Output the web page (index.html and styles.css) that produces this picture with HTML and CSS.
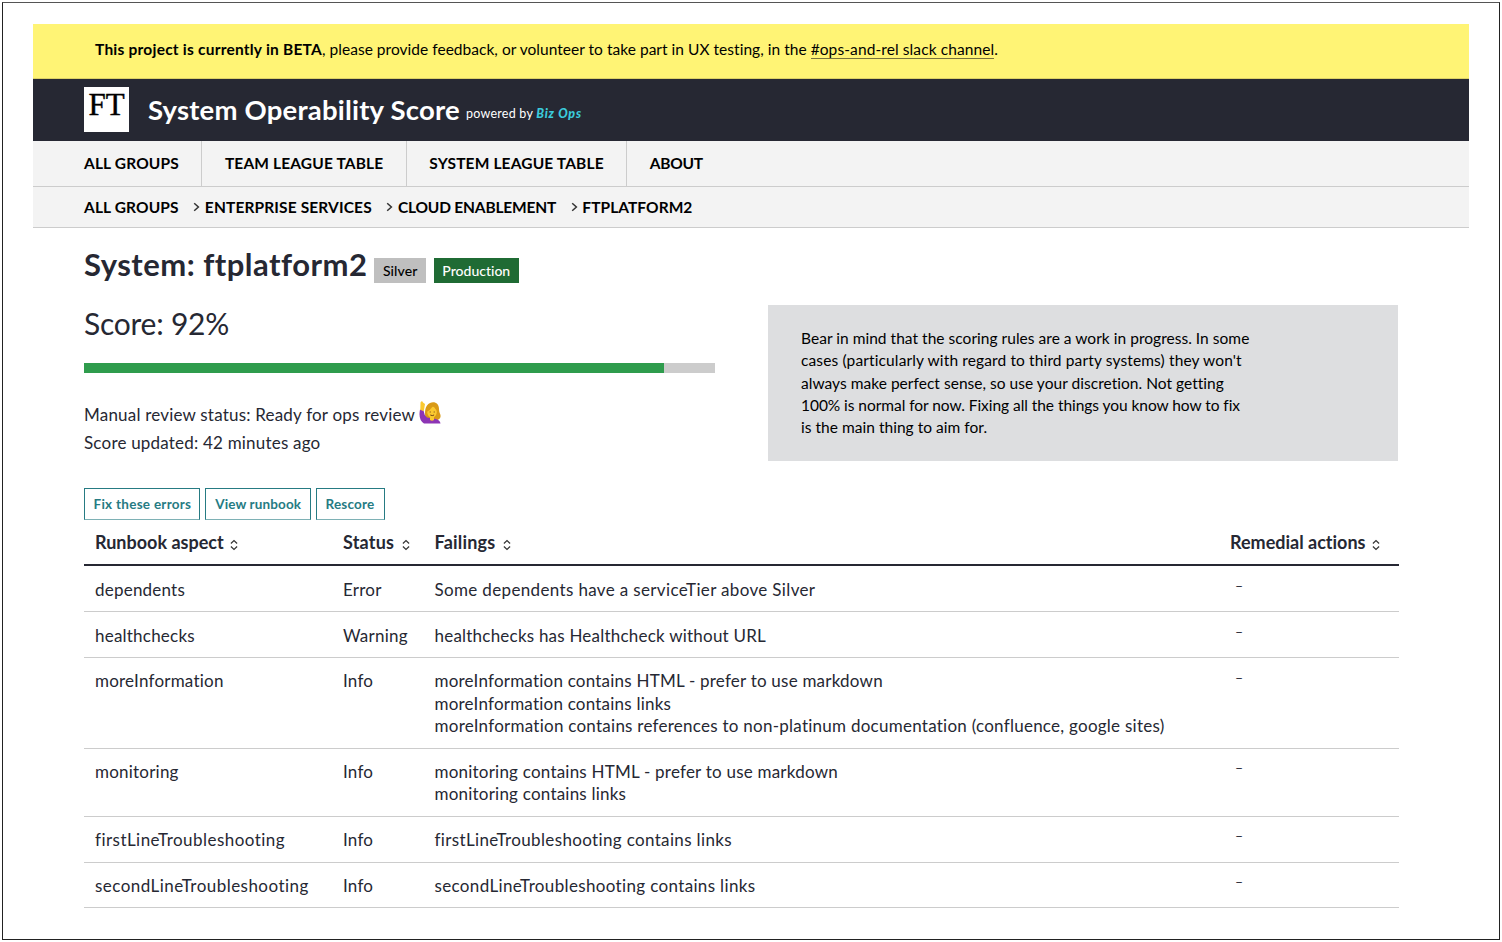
FILE: index.html
```html
<!DOCTYPE html>
<html lang="en">
<head>
<meta charset="utf-8">
<title>System Operability Score</title>
<link rel="stylesheet" href="styles.css">
</head>
<body>
<svg class="defs" aria-hidden="true">
  <symbol id="sort" viewBox="0 0 8 12"><path d="M.9 4.5 4 1.5 7.1 4.5M.9 7.5 4 10.5 7.1 7.5"/></symbol>
  <symbol id="chevron" viewBox="0 0 7 10"><path d="M1.2 1.2 5.4 5 1.2 8.8"/></symbol>
</svg>
<div class="page">
  <div class="banner"><p><strong>This project is currently in BETA</strong>, please provide feedback, or volunteer to take part in UX testing, in the <a>#ops-and-rel slack channel</a>.</p></div>
  <header class="header">
    <div class="logo">FT</div>
    <div class="title">System Operability Score</div>
    <div class="powered">powered by <a>Biz Ops</a></div>
  </header>
  <nav class="nav">
    <a>ALL GROUPS</a><a>TEAM LEAGUE TABLE</a><a>SYSTEM LEAGUE TABLE</a><a class="about">ABOUT</a>
  </nav>
  <nav class="crumbs">
    <a>ALL GROUPS</a><svg class="chevron"><use href="#chevron"/></svg><a>ENTERPRISE SERVICES</a><svg class="chevron"><use href="#chevron"/></svg><a class="tight">CLOUD ENABLEMENT</a><svg class="chevron"><use href="#chevron"/></svg><a class="current">FTPLATFORM2</a>
  </nav>
  <main class="main">
    <div class="heading"><h1>System: ftplatform2</h1><span class="badge silver">Silver</span><span class="badge production">Production</span></div>
    <div class="overview">
      <section class="summary">
        <h2>Score: 92%</h2>
        <div class="progress"><div class="bar" style="width:91.9%"></div></div>
        <p class="meta">Manual review status: Ready for ops review
          <svg class="emoji" viewBox="0 0 22 24">
            <path class="hair" d="M7 20C5 12 6 5 11 3c5-2 9 1 9 6 0 3 1 4 1.500 6 .5 3-1 4-3 5Z"/>
            <path class="purple" d="M1 9.500 4.500 10.500Q5 15 8 17.500L17 19Q21 20 21.500 23.500H5Q-1 20 1 9.500Z"/>
            <path class="skin" d="M1.300 10 1.500 2.500Q3 0 4 2.500L6 4 4.800 11Z"/>
            <path class="skin" d="M11 17h4v3q-2 1.500-4 0Z"/>
            <ellipse class="skin" cx="13" cy="12" rx="4.800" ry="5.500"/>
            <path class="hair" d="M7.500 12Q11 10.500 14.500 5.500q1.500 4 4.500 6Q18.500 4 13 4 8 4 7.500 12Z"/>
            <path class="features" d="M11.200 11.500v1M15.200 11.500v1M11.300 15q2 1.200 3.800 0"/>
          </svg></p>
        <p class="meta">Score updated: 42 minutes ago</p>
      </section>
      <aside class="note">
        Bear in mind that the scoring rules are a work in progress. In some<br>
        <span class="wide">cases (particularly with regard to third party systems) they won't</span><br>
        always make perfect sense, so use your discretion. Not getting<br>
        <span class="tight">100% is normal for now. Fixing all the things you know how to fix</span><br>
        is the main thing to aim for.
      </aside>
    </div>
    <div class="actions"><a class="fix">Fix these errors</a><a class="view">View runbook</a><a class="rescore">Rescore</a></div>
    <table>
      <colgroup><col class="c1"><col class="c2"><col class="c3"><col class="c4"></colgroup>
      <thead><tr>
        <th>Runbook aspect<svg class="sort"><use href="#sort"/></svg></th>
        <th class="wide">Status<svg class="sort"><use href="#sort"/></svg></th>
        <th class="wide">Failings<svg class="sort"><use href="#sort"/></svg></th>
        <th>Remedial actions<svg class="sort"><use href="#sort"/></svg></th>
      </tr></thead>
      <tbody>
        <tr><td>dependents</td><td>Error</td><td class="wide">Some dependents have a serviceTier above Silver</td><td class="dash">–</td></tr>
        <tr><td>healthchecks</td><td>Warning</td><td>healthchecks has Healthcheck without URL</td><td class="dash">–</td></tr>
        <tr><td>moreInformation</td><td>Info</td><td>moreInformation contains HTML - prefer to use markdown<br>moreInformation contains links<br><span class="reference">moreInformation contains references to non-platinum documentation (confluence, google sites)</span></td><td class="dash">–</td></tr>
        <tr><td>monitoring</td><td>Info</td><td>monitoring contains HTML - prefer to use markdown<br>monitoring contains links</td><td class="dash">–</td></tr>
        <tr><td class="wider">firstLineTroubleshooting</td><td>Info</td><td class="wide">firstLineTroubleshooting contains links</td><td class="dash">–</td></tr>
        <tr><td class="wider">secondLineTroubleshooting</td><td>Info</td><td class="wide">secondLineTroubleshooting contains links</td><td class="dash">–</td></tr>
      </tbody>
    </table>
  </main>
</div>
</body>
</html>
```
FILE: styles.css
```css
* { box-sizing: border-box; }
body { margin: 0; background: #fff; color: #262833; font-family: Lato, "Open Sans", sans-serif; font-size: 17px; font-variant-ligatures: none; }
p, h1, h2 { margin: 0; }
svg { fill: none; stroke: #333; }
.defs { display: none; }
.page { width: 1498px; height: 938px; margin: 2px 0 0 2px; padding: 21px 30px 0; border: 1px solid #222; border-top-color: #555; }

.banner { height: 55px; padding-left: 62px; background: #fff475; border-bottom: 1px solid #ddd166; color: #000; font-size: 15.5px; line-height: 51px; letter-spacing: .03px; white-space: pre; }
.banner strong { letter-spacing: .224px; }
.banner a { letter-spacing: .1px; border-bottom: 1px solid #77723d; }

.header { display: flex; height: 62px; padding: 8px 0 0 51px; background: #262833; color: #fff; }
.logo { width: 45px; height: 45px; background: #fff; color: #000; font: 31px/35px "Liberation Serif", serif; text-align: center; -webkit-text-stroke: .4px #000; }
.title { margin-left: 19px; font-size: 27.5px; font-weight: 700; line-height: 45px; letter-spacing: .2px; }
.powered { margin: 4px 0 0 6px; font-size: 12.5px; line-height: 45px; letter-spacing: .259px; }
.powered a { color: #3bcbdc; font-weight: 900; font-style: italic; letter-spacing: .75px; }

.nav { display: flex; height: 46px; padding-left: 28.5px; background: #f3f3f3; border-bottom: 1px solid #ccc; color: #000; font-size: 15.5px; font-weight: 700; line-height: 45px; letter-spacing: .15px; }
.nav a { padding: 0 22.5px; border-right: 1px solid #ccc; }
.nav a:last-child { border: 0; }
.nav .about { letter-spacing: -.26px; }

.crumbs { display: flex; align-items: center; height: 41px; padding: 0 0 1px 51px; background: #f3f3f3; border-bottom: 1px solid #ccc; color: #000; font-size: 15.5px; font-weight: 700; letter-spacing: .13px; }
.crumbs .tight { letter-spacing: -.18px; }
.crumbs .current { letter-spacing: .05px; }
.chevron { width: 7px; height: 10px; margin: 0 4.5px 0 14.7px; stroke-width: 1.5; }

.main { padding: 0 71px 0 51px; }
.heading { display: flex; height: 77px; padding-top: 15px; }
h1 { margin-right: 7px; font-size: 31px; line-height: 42px; letter-spacing: .48px; }
.badge { height: 25px; margin: 15px 8px 0 0; padding: 0 8.5px; font-size: 14px; font-weight: 500; line-height: 26px; }
.silver { background: #bfbfbf; color: #000; letter-spacing: .08px; }
.production { background: #1f6b34; color: #fff; }

.overview { display: flex; justify-content: space-between; height: 156px; }
.summary { width: 631px; }
h2 { height: 58px; font-size: 30px; font-weight: 400; line-height: 37px; letter-spacing: -.242px; }
.progress { height: 10px; margin-bottom: 27px; background: #ccc; }
.bar { height: 10px; background: #2f9c4d; }
.meta { height: 28px; line-height: 28px; letter-spacing: .2px; }
.meta + .meta { padding-top: 1px; }
.emoji { width: 22px; height: 24px; vertical-align: -3px; stroke: none; }
.purple { fill: #8c35b4; }
.hair { fill: #d99a16; }
.skin { fill: #fbc92f; }
.emoji .features { stroke: #704317; stroke-width: 1; }

.note { width: 630px; padding: 22px 33px; background: #dddee0; color: #000; font-size: 15.5px; line-height: 22.25px; letter-spacing: .03px; }
.note .wide { letter-spacing: .129px; }
.note .tight { letter-spacing: -.05px; }

.actions { display: flex; height: 59px; padding-top: 27px; color: #267b83; font-size: 13.5px; font-weight: 700; line-height: 30px; }
.actions a { height: 32px; margin-right: 5px; padding: 0 8.5px; border: 1px solid #267b83; border-bottom-color: #7eb1b5; white-space: nowrap; }
.fix { width: 116px; letter-spacing: .273px; }
.actions .view { width: 106px; padding-left: 9.2px; letter-spacing: .132px; }
.rescore { width: 69px; letter-spacing: .205px; }

table { width: 1315px; table-layout: fixed; border-collapse: collapse; }
.c1 { width: 248px; }
.c2 { width: 91.5px; }
.c3 { width: 795.5px; }
.c4 { width: 180px; }
th { height: 45px; padding: 0 11px; border-bottom: 2px solid #262833; font-size: 18px; line-height: 43px; text-align: left; white-space: nowrap; }
th.wide { letter-spacing: .2px; }
.sort { width: 8px; height: 12px; margin-left: 6px; vertical-align: -2px; stroke-width: 1.2; }
.wide .sort { margin-left: 7.5px; }
td { padding: 12.2px 11px 10.4px; border-bottom: 1px solid #ccc; line-height: 22.25px; letter-spacing: .22px; vertical-align: top; white-space: nowrap; }
tbody tr:first-child td { padding-top: 12.8px; }
td.wide { letter-spacing: .35px; }
td.wider { letter-spacing: .46px; }
.reference { letter-spacing: .256px; }
tbody td.dash, tbody tr:first-child td.dash { padding: 8.5px 16px 0; font-size: 14px; }
```
